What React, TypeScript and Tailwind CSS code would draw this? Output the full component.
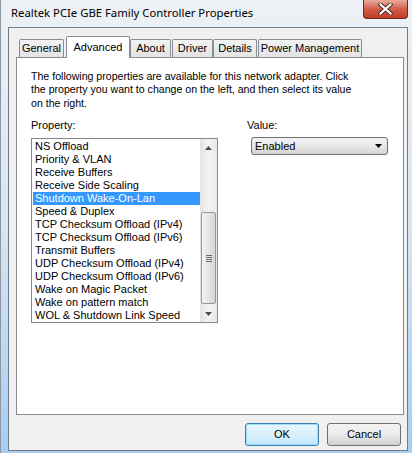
import React from "react";

const items = [
  "NS Offload",
  "Priority & VLAN",
  "Receive Buffers",
  "Receive Side Scaling",
  "Shutdown Wake-On-Lan",
  "Speed & Duplex",
  "TCP Checksum Offload (IPv4)",
  "TCP Checksum Offload (IPv6)",
  "Transmit Buffers",
  "UDP Checksum Offload (IPv4)",
  "UDP Checksum Offload (IPv6)",
  "Wake on Magic Packet",
  "Wake on pattern match",
  "WOL & Shutdown Link Speed",
];

function Tab({ label, width, selected, className }: { label: string; width: string; selected?: boolean; className?: string }) {
  if (selected) {
    return (
      <div
        className={`relative z-10 -mb-px flex h-[22px] items-start justify-center rounded-t-[2px] border border-b-0 border-[#898c95] bg-white pt-[2px] ${width} ${className ?? ""}`}
      >
        {label}
      </div>
    );
  }
  return (
    <div
      className={`flex h-[18px] items-center justify-center rounded-t-[2px] border border-b-0 border-[#898c95] bg-gradient-to-b from-[#f3f3f3] to-[#e3e3e3] ${width} ${className ?? ""}`}
    >
      {label}
    </div>
  );
}

function ArrowUp() {
  return (
    <svg width="7" height="4" viewBox="0 0 7 4">
      <path d="M0 4 L3.5 0 L7 4 Z" fill="#4d4d4d" />
    </svg>
  );
}

function ArrowDown() {
  return (
    <svg width="7" height="4" viewBox="0 0 7 4">
      <path d="M0 0 L7 0 L3.5 4 Z" fill="#4d4d4d" />
    </svg>
  );
}

export default function App() {
  return (
    <div className="relative flex h-[453px] w-[412px] flex-col overflow-hidden border-l border-[#8c97a3] bg-gradient-to-b from-[#edf1f5] via-[#d9e5f0] to-[#a7cdf1] font-['Liberation_Sans',Arial,sans-serif] text-[11px] text-black">
      {/* title bar */}
      <div className="flex h-[27px] shrink-0 items-center pl-[10px] font-['Noto_Sans',sans-serif] text-[11.3px] text-black">
        Realtek PCIe GBE Family Controller Properties
      </div>

      {/* close button */}
      <div className="absolute left-[362px] top-0 flex h-[19px] w-[45px] items-center justify-center rounded-b-[4px] border border-t-0 border-[#6b2a22] bg-gradient-to-b from-[#e9a99c] via-[#cf5e4b] to-[#c23a22]">
        <svg width="15" height="12" viewBox="0 0 15 12">
          <path d="M2.5 1.5 L12.5 10.5 M12.5 1.5 L2.5 10.5" stroke="#4a2a26" strokeWidth="4" strokeLinecap="square" />
          <path d="M2.5 1.5 L12.5 10.5 M12.5 1.5 L2.5 10.5" stroke="#ffffff" strokeWidth="2.2" strokeLinecap="square" />
        </svg>
      </div>

      {/* client area */}
      <div className="mb-[2px] ml-[7px] flex w-[400px] flex-1 flex-col border border-[#6f7c89] bg-[#f0f0f0] pl-[7px] pr-[3px]">
        {/* tabs */}
        <div className="mt-[8px] flex items-end pl-[3px]">
          <Tab label="General" width="w-[45px]" />
          <Tab label="Advanced" width="w-[64px]" selected className="ml-[2px]" />
          <Tab label="About" width="w-[41px]" />
          <Tab label="Driver" width="w-[41px]" className="ml-[1px]" />
          <Tab label="Details" width="w-[44px]" />
          <Tab label="Power Management" width="w-[104px]" className="ml-[1px]" />
        </div>

        {/* panel */}
        <div className="flex h-[358px] flex-col border border-[#898c95] bg-white px-[14px] pt-[12px]">
          <p className="text-[10.6px] leading-[13.4px]">
            The following properties are available for this network adapter. Click
            <br />
            the property you want to change on the left, and then select its value
            <br />
            on the right.
          </p>

          <div className="mt-[9px] flex">
            <div className="flex w-[216px] flex-col">
              <div className="leading-[13px]">Property:</div>
              <div className="mt-[6px] flex h-[185px] w-[187px] border border-[#828790] bg-white">
                <div className="flex flex-1 flex-col pl-px pt-px">
                  {items.map((it) => (
                    <div
                      key={it}
                      className={`h-[13px] whitespace-nowrap pl-[2px] leading-[13px] ${
                        it === "Shutdown Wake-On-Lan" ? "bg-[#3399ff] text-white" : ""
                      }`}
                    >
                      {it}
                    </div>
                  ))}
                </div>
                {/* scrollbar */}
                <div className="flex w-[17px] flex-col bg-gradient-to-r from-[#e3e3e3] via-[#f3f3f3] to-[#eaeaea]">
                  <div className="flex h-[17px] items-center justify-center">
                    <ArrowUp />
                  </div>
                  <div className="h-[56px]" />
                  <div className="mx-px flex h-[92px] items-center justify-center rounded-[2px] border border-[#979797] bg-gradient-to-r from-[#f3f3f3] via-[#e6e6e6] to-[#d5d5d5]">
                    <div className="flex flex-col gap-[1px]">
                      <div className="h-px w-[6px] bg-[#6a6a6a]" />
                      <div className="h-px w-[6px] bg-[#6a6a6a]" />
                      <div className="h-px w-[6px] bg-[#6a6a6a]" />
                      <div className="h-px w-[6px] bg-[#6a6a6a]" />
                    </div>
                  </div>
                  <div className="flex-1" />
                  <div className="flex h-[17px] items-center justify-center">
                    <ArrowDown />
                  </div>
                </div>
              </div>
            </div>

            <div className="flex flex-col">
              <div className="leading-[13px]">Value:</div>
              <div className="ml-[4px] mt-[5px] flex h-[18px] w-[137px] items-center justify-between rounded-[3px] border border-[#707070] bg-gradient-to-b from-[#f3f3f3] via-[#e8e8e8] to-[#d3d3d3] pl-[3px] pr-[5px]">
                <span>Enabled</span>
                <svg width="7" height="4" viewBox="0 0 7 4">
                  <path d="M0 0 L7 0 L3.5 4 Z" fill="#000" />
                </svg>
              </div>
            </div>
          </div>
        </div>

        {/* buttons */}
        <div className="mt-[8px] flex justify-end gap-[8px] pr-[3px]">
          <div className="flex h-[23px] w-[74px] items-center justify-center rounded-[3px] border border-[#3c7fb1] bg-gradient-to-b from-[#eaf6fd] via-[#d9f0fc] to-[#bee6fd] shadow-[inset_0_0_0_1px_#9ee0fb]">
            OK
          </div>
          <div className="flex h-[23px] w-[74px] items-center justify-center rounded-[3px] border border-[#707070] bg-gradient-to-b from-[#f2f2f2] via-[#ebebeb] to-[#cfcfcf]">
            Cancel
          </div>
        </div>
      </div>
    </div>
  );
}
